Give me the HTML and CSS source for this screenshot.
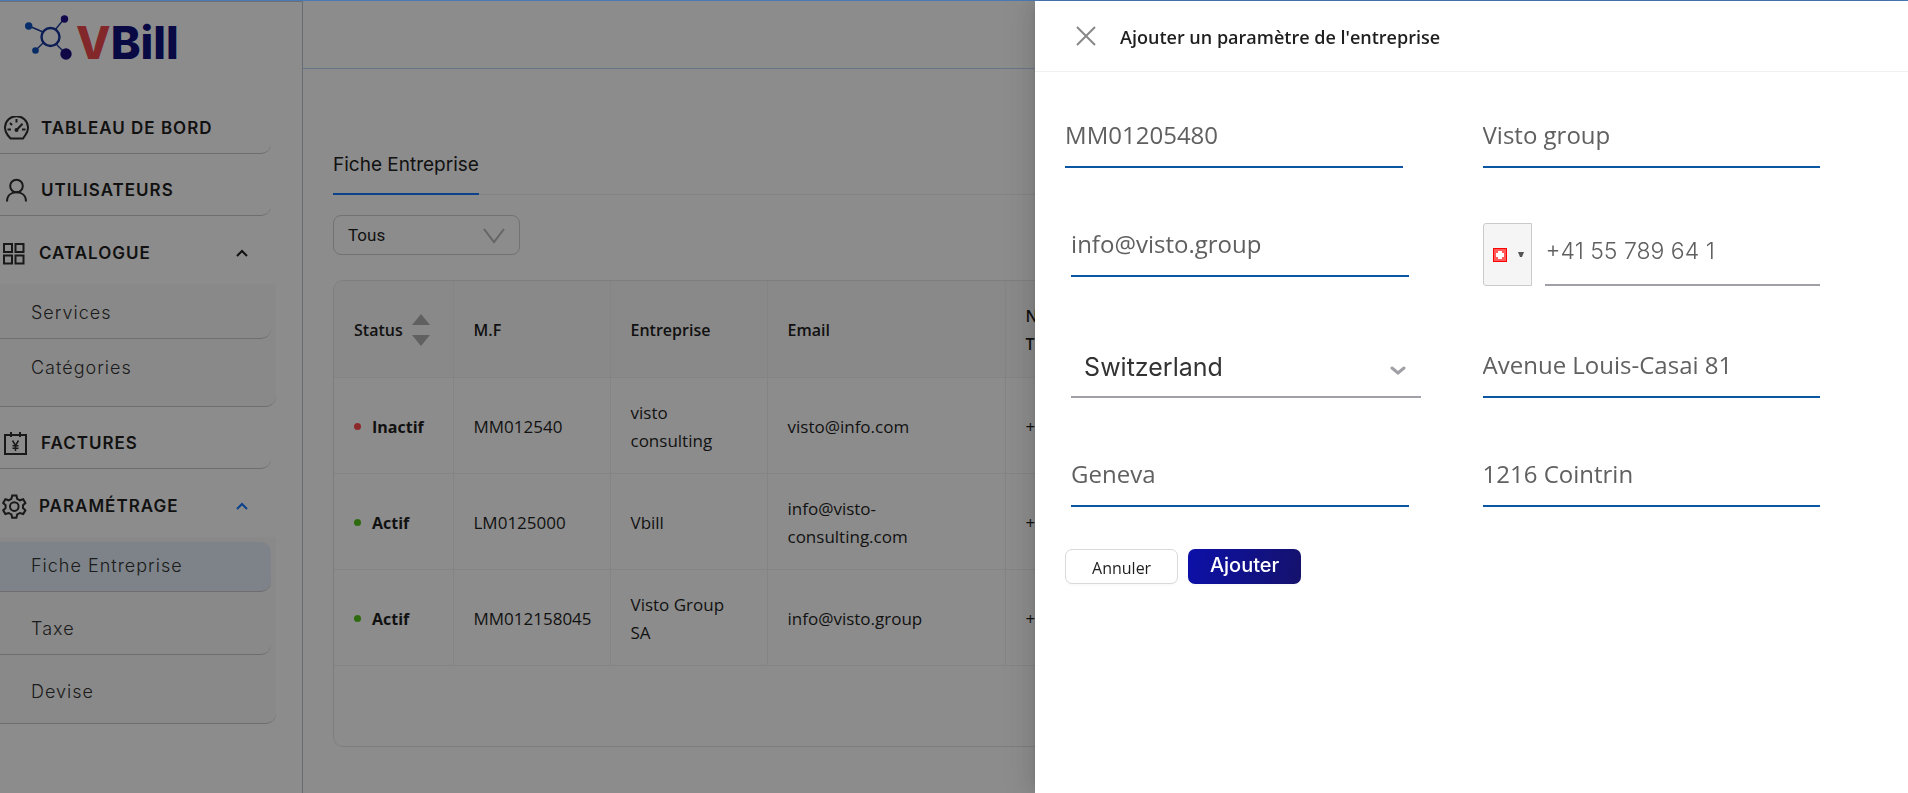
FILE: index.html
```html
<!DOCTYPE html>
<html lang="fr">
<head>
<meta charset="utf-8">
<title>VBill - Fiche Entreprise</title>
<link rel="stylesheet" href="styles.css">
</head>
<body>
<div class="app">
  <aside class="sidebar">
    <div class="logo">
      <svg class="logo-mark" viewBox="0 0 48 46" width="48" height="46" aria-hidden="true">
        <g fill="none" stroke="#1a3c96" stroke-width="1.4"><path d="M4 11 18 17M39 4 30 15"/><path d="m11 35 8-8M31 29l10 10"/></g>
        <circle cx="25.500" cy="22" r="9" fill="none" stroke="#17359c" stroke-width="2.400"/>
        <circle cx="3.700" cy="11" r="3.700" fill="#0b55c4"/><circle cx="39.500" cy="4" r="3.700" fill="#20108a"/>
        <circle cx="10.500" cy="35.500" r="3.300" fill="#0b4fb8"/><circle cx="41" cy="39" r="5.700" fill="#1c0d80"/>
      </svg>
      <span class="logo-text"><span class="logo-v">V</span>Bill</span>
    </div>
    <nav class="menu">
      <a class="item" href="#"><svg class="icon" viewBox="0 0 25 25"><path d="M6.500 22.500h12.500l2.400-3.500a11.500 11.500 0 1 0-17.800 0z"/><path d="M12.500 3v3.500M3.500 13.500H7M18 13.500h3.500M6 7l2 2M12.500 14l6-6.200"/><circle cx="12.500" cy="14" r="1"/></svg>TABLEAU DE BORD</a>
      <a class="item" href="#"><svg class="icon" viewBox="0 0 25 25"><circle cx="12.500" cy="8" r="6.300"/><path d="M3 23.500c0-6 4-9.200 9.500-9.200s9.500 3.200 9.500 9.200"/></svg>UTILISATEURS</a>
      <a class="item plain" href="#"><svg class="icon" viewBox="0 0 25 25"><path d="M2 3h8v8H2zM13.500 3h8v8h-8zM2 14.500h8v8H2zM13.500 14.500h8v8h-8z"/></svg>CATALOGUE<svg class="chevron" viewBox="0 0 14 10"><path d="m2 8 5-5 5 5"/></svg></a>
      <div class="submenu catalogue">
        <a class="subitem" href="#">Services</a>
        <a class="subitem plain" href="#">Catégories</a>
      </div>
      <a class="item" href="#"><svg class="icon" viewBox="0 0 25 25"><path d="M1 4h21v19H1zM7 1v5M16 1v5"/><path stroke-width="1.500" d="M8.500 9.500l3 5 3-5M11.500 14.500V20M8.500 14.700h6M8.500 17.200h6"/></svg>FACTURES</a>
      <a class="item plain" href="#"><svg class="icon" viewBox="0 0 25 25"><path d="M10.200 1.500h4.200l.8 3.300 2.700 1.500 3.300-1 2.200 3.700-2.400 2.300v2.700l2.400 2.300-2.200 3.700-3.300-1-2.700 1.500-.8 3.300h-4.200l-.8-3.300-2.700-1.500-3.300 1-2.200-3.700L3.600 14v-2.700L1.200 9l2.200-3.700 3.300 1 2.700-1.500z"/><circle cx="12.300" cy="12.600" r="4.300"/></svg>PARAMÉTRAGE<svg class="chevron open" viewBox="0 0 14 10"><path d="m2 8 5-5 5 5"/></svg></a>
      <div class="submenu">
        <a class="subitem active" href="#">Fiche Entreprise</a>
        <a class="subitem" href="#">Taxe</a>
        <a class="subitem plain" href="#">Devise</a>
      </div>
    </nav>
  </aside>
  <div class="page">
    <header class="topbar"></header>
    <main class="content">
      <div class="tabs"><button class="tab" type="button">Fiche Entreprise</button></div>
      <div class="filter">
        <select class="filter-select" aria-label="Filtre"><option>Tous</option></select>
        <svg class="filter-arrow" viewBox="0 0 22 16"><path d="m1 1 10 13L21 1"/></svg>
      </div>
      <div class="table-card">
        <table class="table">
          <colgroup><col class="c-status"><col class="c-code"><col class="c-code"><col class="c-email"><col></colgroup>
          <thead><tr>
            <th><span class="sort">Status<svg viewBox="0 0 18 32" width="18" height="32"><path d="M9 0 18 11H0zM0 21h18L9 32z"/></svg></span></th>
            <th>M.F</th><th>Entreprise</th><th>Email</th><th>Numéro<br>Téléphone</th>
          </tr></thead>
          <tbody>
            <tr><td><span class="status off">Inactif</span></td><td>MM012540</td><td>visto<br>consulting</td><td>visto@info.com</td><td>+41</td></tr>
            <tr><td><span class="status">Actif</span></td><td>LM0125000</td><td>Vbill</td><td>info@visto-<br>consulting.com</td><td>+41</td></tr>
            <tr><td><span class="status">Actif</span></td><td>MM012158045</td><td>Visto Group<br>SA</td><td>info@visto.group</td><td>+41</td></tr>
          </tbody>
        </table>
      </div>
    </main>
  </div>
</div>
<div class="mask"></div>
<section class="drawer" role="dialog" aria-labelledby="drawer-title">
  <header class="drawer-head">
    <button class="close" type="button" aria-label="Fermer"><svg viewBox="0 0 20 20" width="20" height="20"><path d="m1 1 18 18M19 1 1 19"/></svg></button>
    <h1 class="drawer-title" id="drawer-title">Ajouter un paramètre de l'entreprise</h1>
  </header>
  <form class="form">
    <div class="grid">
      <input class="field" aria-label="Matricule fiscal" value="MM01205480">
      <input class="field" aria-label="Entreprise" value="Visto group">
      <input class="field inset" type="email" aria-label="Email" value="info@visto.group">
      <div class="phone">
        <button class="flag" type="button" aria-label="Pays : Suisse">
          <svg viewBox="0 0 14 14" width="14" height="14"><path fill="#f00" d="M0 0h14v14H0z"/><path fill="#ff5c5c" d="M1 1h12v12H1z"/><path fill="#fff" d="M5 3h4v2h2v4H9v2H5V9H3V5h2z"/></svg>
          <svg viewBox="0 0 6 5" width="6" height="5"><path fill="#555" d="M0 0h6L4 5H2z"/></svg>
        </button>
        <input class="field geo grey" type="tel" aria-label="Téléphone" value="+41 55 789 64 1">
      </div>
      <div class="country">
        <select class="field geo grey dark" aria-label="Pays"><option>Switzerland</option></select>
        <svg class="country-arrow" viewBox="0 0 16 10"><path d="m2 2 6 5 6-5"/></svg>
      </div>
      <input class="field" aria-label="Adresse" value="Avenue Louis-Casai 81">
      <input class="field inset" aria-label="Ville" value="Geneva">
      <input class="field" aria-label="Code postal" value="1216 Cointrin">
    </div>
    <div class="actions">
      <button class="btn" type="button">Annuler</button>
      <button class="btn primary" type="submit">Ajouter</button>
    </div>
  </form>
</section>
</body>
</html>
```
FILE: styles.css
```css
* { box-sizing: border-box; }
body {
  margin: 0;
  border-top: 1px solid #4a7ab5;
  background: #fff;
  color: #1f1f1f;
  font: 16px/28px "Open Sans", "Noto Sans", sans-serif;
}
button, input, select { font: inherit; color: inherit; }
a { color: inherit; text-decoration: none; }

.app { display: flex; height: calc(100vh - 1px); overflow: hidden; }

.sidebar {
  flex: none;
  width: 303px;
  border-top: 1px solid #ccc;
  border-right: 1px solid #b9c8d8;
  font-family: Inter, sans-serif;
}
.logo { display: flex; gap: 3px; height: 102px; padding: 13px 0 0 25px; }
.logo-text { color: #11117c; font: 800 45px/56px Inter, sans-serif; }
.logo-v { color: #ef4a4d; }

.item, .subitem {
  display: flex;
  align-items: center;
  width: 271px;
  height: 50px;
  border-bottom: 1px solid #c8c8c8;
  border-radius: 0 10px 10px 0;
}
.item { gap: 12px; margin-bottom: 12px; padding: 0 0 1px 4px; font-size: 17px; font-weight: 600; letter-spacing: 1px; }
.plain { border-bottom-color: transparent; }
.item.plain { height: 51px; margin-bottom: 5px; padding: 0 0 0 2px; }
.icon { width: 25px; height: 25px; fill: none; stroke: #2e2e2e; stroke-width: 2; }
.chevron { width: 14px; height: 10px; margin: 0 22px 0 auto; fill: none; stroke: #1f1f1f; stroke-width: 2; }
.open { stroke: #1677ff; }
.submenu {
  display: grid;
  gap: 13px;
  width: 276px;
  margin-bottom: 12px;
  padding: 5px 0;
  border-bottom: 1px solid #c8c8c8;
  border-radius: 0 0 10px 0;
  background: #fafafa;
}
.catalogue { gap: 5px; padding-bottom: 12px; }
.subitem { padding: 0 0 2px 31px; color: #333; font-size: 18px; font-weight: 300; letter-spacing: 1px; }
.active { background: #e3eef7; }

.page { flex: 1; min-width: 0; }
.topbar { height: 68px; border-bottom: 1px solid #c0d8f8; }
.content { padding: 72px 30px 0; }
.tabs { display: flex; height: 54px; border-bottom: 1px solid #f0f0f0; }
.tab {
  height: 54px;
  padding: 0 0 5px;
  border: 0;
  border-bottom: 2px solid #1677ff;
  background: none;
  font: 19px/28px Inter, sans-serif;
}
.filter { position: relative; width: 187px; margin: 20px 0 25px; }
.filter-select {
  width: 100%;
  height: 40px;
  padding: 0 14px;
  border: 1px solid #d0d0d0;
  border-radius: 8px;
  appearance: none;
  background: #fff;
  font: 17px/28px Roboto, sans-serif;
}
.filter-arrow { position: absolute; top: 13px; right: 15px; width: 22px; height: 16px; fill: none; stroke: #b8b8b8; stroke-width: 2; }

.table-card { overflow: hidden; height: 467px; border: 1px solid #e6e6e6; border-radius: 10px; }
.table { width: 100%; min-width: 1100px; border-collapse: collapse; table-layout: fixed; }
.c-status { width: 119px; }
.c-code { width: 157px; }
.c-email { width: 238px; }
.table th, .table td {
  height: 96px;
  padding: 3px 20px 0;
  border-right: 1px solid #f0f0f0;
  border-bottom: 1px solid #f0f0f0;
  text-align: left;
  font-size: 17px;
  font-weight: 400;
}
.table th { background: #fafafa; font-weight: 500; }
.table th { font-size: 16px; font-weight: 600; }
.sort { display: flex; align-items: center; gap: 9px; }
.sort svg { flex: none; fill: #b0b0b0; }
.status { display: flex; align-items: center; gap: 11px; font-size: 16px; font-weight: 700; }
.status::before { content: ""; width: 7px; height: 7px; border-radius: 50%; background: #52c41a; }
.off::before { background: #ff4d4f; }

.mask { position: fixed; inset: 1px 0 0; background: rgba(0, 0, 0, .45); }

.drawer {
  position: fixed;
  inset: 1px 0 0 auto;
  width: 45.75%;
  background: #fff;
  box-shadow: -6px 0 16px rgba(0, 0, 0, .08), -3px 0 6px -4px rgba(0, 0, 0, .12), -9px 0 28px 8px rgba(0, 0, 0, .05);
}
.drawer-head { display: flex; align-items: center; gap: 24px; height: 71px; padding: 0 41px; border-bottom: 1px solid #f0f0f0; }
.close { display: flex; padding: 0; border: 0; background: none; }
.close svg { fill: none; stroke: #888; stroke-width: 2; }
.drawer-title { margin: 0; padding-top: 2px; font-size: 18px; font-weight: 600; }
.form { padding: 36px 88px 0 30px; }
.grid { display: grid; grid-template-columns: 1fr 1fr; gap: 49px 80px; align-items: start; }
.field {
  width: 100%;
  height: 60px;
  padding: 0 0 5px;
  border: 0;
  border-bottom: 2px solid #0b57a4;
  border-radius: 0;
  outline: 0;
  appearance: none;
  background: none;
  color: #606060;
  font-size: 24px;
}
.inset { position: relative; left: 6px; }
.geo { font-family: Inter, sans-serif; }
.grey { border-bottom-color: #a0a0a6; }
.phone { display: flex; gap: 13px; padding: 6px 0 3px; }
.phone .field { height: 63px; padding-left: 1px; font-size: 23px; font-weight: 300; }
.flag {
  flex: none;
  display: flex;
  align-items: center;
  justify-content: center;
  gap: 11px;
  width: 49px;
  height: 63px;
  padding: 0 0 0 3px;
  border: 1px solid #cacaca;
  border-radius: 3px 0 0 3px;
  background: #f5f5f5;
}
.country { position: relative; margin: 0 -18px 0 6px; }
.dark { padding: 0 0 0 13px; color: #333; font-size: 25px; }
.country-arrow { position: absolute; top: 28px; right: 15px; width: 16px; height: 10px; fill: none; stroke: #a0a0a6; stroke-width: 3; stroke-linecap: round; }
.actions { display: flex; gap: 10px; margin-top: 42px; }
.btn {
  width: 113px;
  height: 35px;
  padding: 2px 0 0;
  border: 1px solid #d9d9d9;
  border-radius: 7px;
  background: #fff;
  box-shadow: 0 2px 0 rgba(0, 0, 0, .02);
}
.primary {
  padding: 0 0 3px;
  border: 0;
  background: linear-gradient(100deg, #0c10a8, #15126c);
  color: #fff;
  font: 500 20px/28px Inter, sans-serif;
}
```
